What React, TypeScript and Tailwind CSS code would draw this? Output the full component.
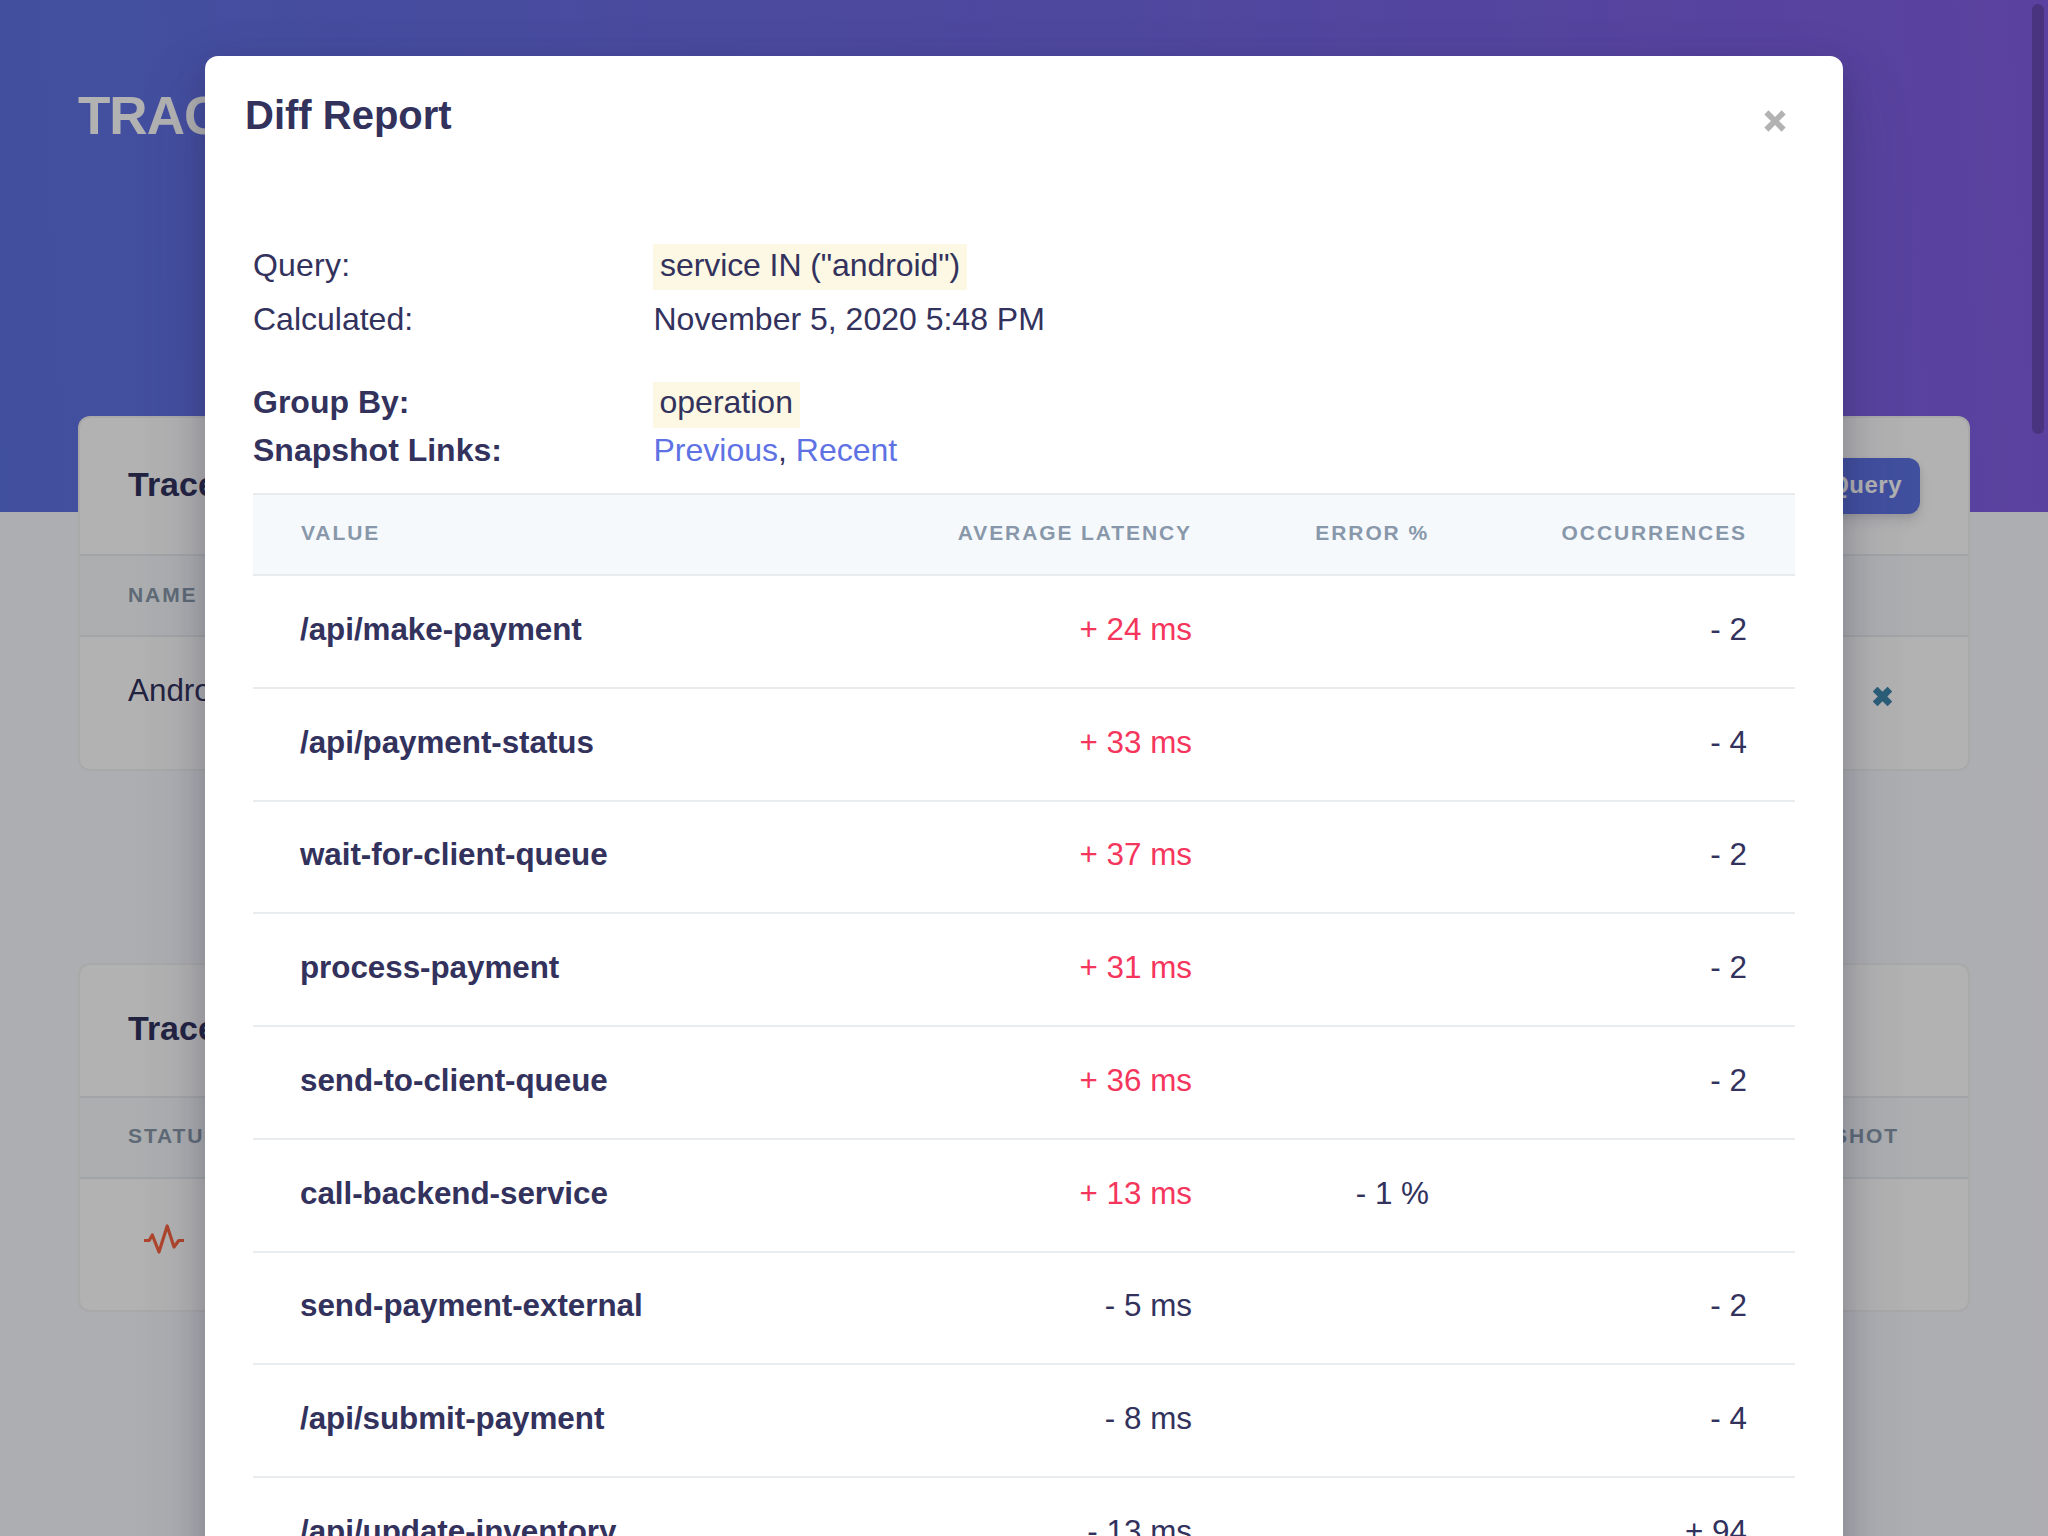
type DiffRow = { value: string; latency: string; slower?: boolean; error?: string; occurrences?: string };

const DIFF_ROWS: DiffRow[] = [
  { value: "/api/make-payment", latency: "+ 24 ms", slower: true, occurrences: "- 2" },
  { value: "/api/payment-status", latency: "+ 33 ms", slower: true, occurrences: "- 4" },
  { value: "wait-for-client-queue", latency: "+ 37 ms", slower: true, occurrences: "- 2" },
  { value: "process-payment", latency: "+ 31 ms", slower: true, occurrences: "- 2" },
  { value: "send-to-client-queue", latency: "+ 36 ms", slower: true, occurrences: "- 2" },
  { value: "call-backend-service", latency: "+ 13 ms", slower: true, error: "- 1 %" },
  { value: "send-payment-external", latency: "- 5 ms", occurrences: "- 2" },
  { value: "/api/submit-payment", latency: "- 8 ms", occurrences: "- 4" },
  { value: "/api/update-inventory", latency: "- 13 ms", occurrences: "+ 94" },
];

function CrossIcon({ className, width }: { className: string; width: number }) {
  return (
    <svg viewBox="0 0 22 22" className={className} fill="none" stroke="currentColor" strokeWidth={width}>
      <path d="M2.4 2.4 19.6 19.6M19.6 2.4 2.4 19.6" />
    </svg>
  );
}

function PulseIcon() {
  return (
    <svg viewBox="0 0 40 32" className="h-[32px] w-[40px] text-[#fb6340]" fill="none" stroke="currentColor" strokeWidth="3.2" strokeLinejoin="round">
      <path d="M0 17.5h5.2L8.3 12 15 29 23.2 3 30 24 34.8 17.5H40" />
    </svg>
  );
}

function Background() {
  return (
    <div className="flex flex-col">
      <header className="h-[512px] bg-[linear-gradient(87deg,#5e72e4_0%,#825ee4_100%)] pt-[84px] pl-[78px]">
        <h1 className="text-[53px] leading-[64px] font-bold tracking-[-1px] text-white">TRACES</h1>
      </header>

      <main className="-mt-[96px] flex flex-col gap-[192px] px-[78px]">
        <section className="h-[355px] rounded-[12px] border-2 border-black/5 bg-white">
          <div className="flex h-[136px] items-center justify-between pr-[48px] pl-[48px]">
            <h2 className="pb-[5px] text-[34px] leading-[44px] font-bold">Trace Queries</h2>
            <button className="h-[56px] rounded-[12px] bg-[#5e72e4] px-[18px] pb-[2px] text-[24px] font-bold tracking-[0.5px] text-white shadow-[0_8px_12px_rgba(50,50,93,0.11),0_2px_6px_rgba(0,0,0,0.08)]">
              Create Query
            </button>
          </div>
          <div className="flex h-[81px] items-center border-t-2 border-[#e9ecef] bg-[#f6f9fc] pb-[2px] pl-[48px] text-[21px] leading-[32px] font-bold tracking-[1.9px] text-[#8898aa]">
            NAME
          </div>
          <div className="flex h-[134px] items-start justify-between border-t-2 border-[#e9ecef] pt-[30px] pr-[76px] pl-[48px] text-[31.4px] leading-[48px]">
            <span>Android</span>
            <CrossIcon width={7.8} className="mt-[20px] h-[19px] w-[19px] text-[#3f87ad]" />
          </div>
        </section>

        <section className="h-[349px] rounded-[12px] border-2 border-black/5 bg-white">
          <div className="flex h-[131px] items-center pb-[6px] pl-[48px]">
            <h2 className="text-[34px] leading-[44px] font-bold">Trace Snapshots</h2>
          </div>
          <div className="flex h-[81px] items-center justify-between border-t-2 border-[#e9ecef] bg-[#f6f9fc] pr-[69px] pb-[4px] pl-[48px] text-[21px] leading-[32px] font-bold tracking-[1.9px] text-[#8898aa]">
            <span>STATUS</span>
            <span>SNAPSHOT</span>
          </div>
          <div className="border-t-2 border-[#e9ecef] pt-[43.5px] pl-[64px]">
            <PulseIcon />
          </div>
        </section>
      </main>
    </div>
  );
}

const GRID = "grid grid-cols-[657px_331px_236px_318px] items-center border-t-2 border-[#e9ecef]";

function DiffModal() {
  return (
    <div className="absolute top-[56px] left-[205px] flex h-[1700px] w-[1638px] flex-col rounded-[13px] bg-white shadow-[0_30px_70px_rgba(50,50,93,0.2),0_10px_30px_rgba(0,0,0,0.17)]">
      <div className="flex h-[188px] items-start justify-between pt-[29px] pr-[57px] pl-[40px]">
        <h2 className="text-[40px] leading-[60px] font-bold">Diff Report</h2>
        <CrossIcon width={5.8} className="mt-[25px] h-[22px] w-[22px] text-[#b2b2b2]" />
      </div>

      <div className="flex flex-col px-[48px] text-[32px]">
        <div className="flex h-[54px] leading-[42px]">
          <span className="w-[400px] tracking-[0.2px]">Query:</span>
          <span className="h-[46px] w-[314px] bg-[#fcf8e3] pl-[7px] whitespace-nowrap tracking-[-0.08px]">service IN ("android")</span>
        </div>
        <div className="flex h-[84px] leading-[42px]">
          <span className="w-[400px]">Calculated:</span>
          <span className="pl-[0.5px]">November 5, 2020 5:48 PM</span>
        </div>
        <div className="flex h-[49px] leading-[40px]">
          <span className="w-[400px] font-bold">Group By:</span>
          <span className="h-[46px] w-[147px] bg-[#fcf8e3] pl-[6.5px]">operation</span>
        </div>
        <div className="flex h-[62px] leading-[39px]">
          <span className="w-[400px] font-bold">Snapshot Links:</span>
          <span className="pl-[0.5px]">
            <a className="text-[#5e72e4]">Previous</a>, <a className="text-[#5e72e4]">Recent</a>
          </span>
        </div>
      </div>

      <div className="mx-[48px]">
        <div className={`${GRID} h-[81px] bg-[#f6f9fc] pb-[4px] text-[21px] leading-[32px] font-bold tracking-[1.9px] text-[#8898aa]`}>
          <span className="pl-[48px]">VALUE</span>
          <span className="pr-[49px] text-right">AVERAGE LATENCY</span>
          <span className="pr-[48px] text-right">ERROR %</span>
          <span className="pr-[48px] text-right">OCCURRENCES</span>
        </div>
        {DIFF_ROWS.map((row) => (
          <div key={row.value} className={`${GRID} h-[112.75px] pb-[3px] text-[31.4px] leading-[48px]`}>
            <span className="pl-[47px] font-bold tracking-[-0.05px]">{row.value}</span>
            <span className={`pr-[49px] text-right ${row.slower ? "text-[#f5365c]" : ""}`}>{row.latency}</span>
            <span className="pr-[48px] text-right">{row.error}</span>
            <span className="pr-[48px] text-right">{row.occurrences}</span>
          </div>
        ))}
      </div>
    </div>
  );
}

export default function App() {
  return (
    <div className="relative h-[1536px] w-[2048px] overflow-hidden bg-[#f8f9fe] font-['Liberation_Sans',Arial,sans-serif] text-[#32325d]">
      <Background />
      <div className="absolute inset-0 bg-black/30" />
      <DiffModal />
      <div className="absolute top-[4px] right-[4px] h-[430px] w-[12px] rounded-full bg-black/20" />
    </div>
  );
}
